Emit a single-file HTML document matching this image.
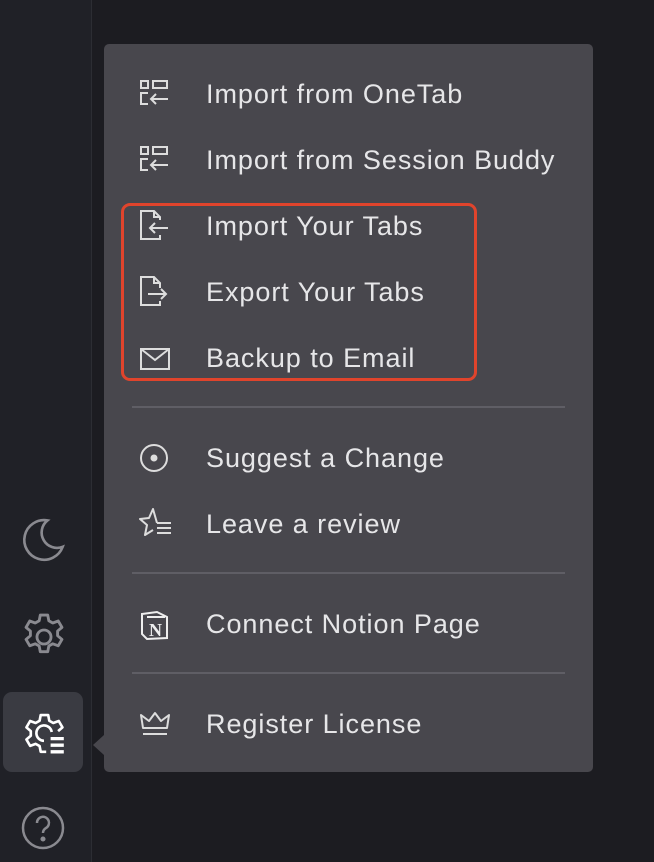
<!DOCTYPE html>
<html><head><style>
body{margin:0;width:654px;height:862px;background:#1c1c21;position:relative;overflow:hidden;font-family:"Liberation Sans",sans-serif}
.side{position:absolute;left:0;top:0;width:91px;height:862px;background:#202127;border-right:1px solid #2c2d33}
.menu{position:absolute;left:104px;top:44px;width:489px;height:728px;background:#48474d;border-radius:5px}
.item{position:absolute;left:102px;font-size:27px;color:#e6e6e8;line-height:30px;letter-spacing:0.95px}
.ic{position:absolute;left:36px}
.div{position:absolute;left:28px;width:433px;height:2px;background:#5f5e65}
svg{overflow:visible}
</style></head><body>
<div class="side">
<svg style="position:absolute;left:22px;top:518px" width="44" height="44" viewBox="2 2 20 20" fill="none" stroke="#8a8a90" stroke-width="1.2"><path d="M21 12.79A9 9 0 1 1 11.21 3 7 7 0 0 0 21 12.79z" transform="rotate(15 12 12)"/></svg>
<svg style="position:absolute;left:22px;top:614px" width="44" height="46" viewBox="2.5 1.5 19 21" fill="none" stroke="#8a8a90" stroke-width="1.3" stroke-linejoin="round"><path d="M10.3 2h3.4l.5 2.6 1.8 1 2.5-.9 1.7 2.9-2 1.7v2.1l2 1.7-1.7 2.9-2.5-.9-1.8 1-.5 2.6h-3.4l-.5-2.6-1.8-1-2.5.9-1.7-2.9 2-1.7v-2.1l-2-1.7 1.7-2.9 2.5.9 1.8-1z"/><circle cx="12" cy="12" r="3.2"/></svg>
<div style="position:absolute;left:3px;top:692px;width:80px;height:80px;background:#3a3b42;border-radius:9px"></div>
<svg style="position:absolute;left:22px;top:710px" width="44" height="44" viewBox="2 2 20 20" fill="none" stroke="#fff" stroke-width="1.2" stroke-linejoin="round"><path d="M13 21h-2.5l-.5-2.6-1.8-1-2.5.9-1.7-2.9 2-1.7v-2.1l-2-1.7 1.7-2.9 2.5.9 1.8-1 .5-2.6h3.4l.5 2.6 1.8 1 2.5-.9 1.7 2.9-2 1.7"/><path d="M12 16a3.5 3.5 0 1 1 3.5-4"/><path d="M15 15h6M15 18h6M15 21h6" stroke-width="1.5"/></svg>
<svg style="position:absolute;left:22px;top:806px" width="44" height="44" viewBox="0 0 44 44" fill="none" stroke="#8a8a90" stroke-width="2.5"><circle cx="21" cy="22" r="20"/><path d="M15 17a6 6 0 1 1 9 5c-2 1.2-3 2.5-3 5"/><circle cx="21" cy="33" r="1.3" fill="#8a8a90"/></svg>
</div>
<div style="position:absolute;left:93px;top:735px;width:0;height:0;border-top:10px solid transparent;border-bottom:10px solid transparent;border-right:11px solid #48474d"></div>
<div class="menu">
<svg class="ic" style="top:36px" width="30" height="26" viewBox="0 0 30 26" fill="none" stroke="#ddd" stroke-width="2"><rect x="1" y="1" width="7" height="7"/><rect x="13" y="1" width="14" height="7"/><path d="M8 13H1v11h7M28 19H11M16 14l-5 5 5 5"/></svg>
<div class="item" style="top:35px">Import from OneTab</div>
<svg class="ic" style="top:102px" width="30" height="26" viewBox="0 0 30 26" fill="none" stroke="#ddd" stroke-width="2"><rect x="1" y="1" width="7" height="7"/><rect x="13" y="1" width="14" height="7"/><path d="M8 13H1v11h7M28 19H11M16 14l-5 5 5 5"/></svg>
<div class="item" style="top:101px">Import from Session Buddy</div>
<svg class="ic" style="top:166px" width="30" height="30" viewBox="0 0 30 30" fill="none" stroke="#ddd" stroke-width="2"><path d="M20 10V7l-6-6H1v28h19v-4M14 1v6h6M28 18H10M15 13l-5 5 5 5"/></svg>
<div class="item" style="top:167px">Import Your Tabs</div>
<svg class="ic" style="top:232px" width="30" height="30" viewBox="0 0 30 30" fill="none" stroke="#ddd" stroke-width="2"><path d="M20 12V7l-6-6H1v28h19v-4M14 1v6h6M8 18h18M21 13l5 5-5 5"/></svg>
<div class="item" style="top:233px">Export Your Tabs</div>
<svg class="ic" style="top:304px" width="30" height="22" viewBox="0 0 30 22" fill="none" stroke="#ddd" stroke-width="2"><rect x="1" y="1" width="28" height="20"/><path d="M1 1l14 11 14-11"/></svg>
<div class="item" style="top:299px">Backup to Email</div>
<div style="position:absolute;left:17px;top:159px;width:350px;height:172px;border:3px solid #e0442c;border-radius:9px"></div>
<div class="div" style="top:362px"></div>
<svg class="ic" style="top:400px" width="30" height="30" viewBox="0 0 30 30" fill="none" stroke="#ddd" stroke-width="2"><circle cx="14" cy="14" r="13"/><circle cx="14" cy="14" r="2.5" fill="#ddd"/></svg>
<div class="item" style="top:399px">Suggest a Change</div>
<svg class="ic" style="top:464px" width="32" height="30" viewBox="0 0 32 30" fill="none" stroke="#ddd" stroke-width="2" stroke-linejoin="round"><path d="M17 15L13 1 9 10 0 11 7 17 5 27 13 22"/><path d="M17 15h14M17 20h14M17 25h14"/></svg>
<div class="item" style="top:465px">Leave a review</div>
<div class="div" style="top:528px"></div>
<svg class="ic" style="top:566px" width="30" height="30" viewBox="0 0 30 30" fill="none" stroke="#eee" stroke-width="2"><path d="M2 4l15-2 10 5v21l-20 1-5-5z"/><path d="M7 7h18"/><text x="9" y="26" font-family="Liberation Serif" font-weight="bold" font-size="18" fill="#eee" stroke="none">N</text></svg>
<div class="item" style="top:565px">Connect Notion Page</div>
<div class="div" style="top:628px"></div>
<svg class="ic" style="top:668px" width="30" height="24" viewBox="0 0 30 24" fill="none" stroke="#ddd" stroke-width="2" stroke-linejoin="round"><path d="M3 16L1 3l8 6 6-8 6 8 8-6-2 13z"/><path d="M3 22h24"/></svg>
<div class="item" style="top:665px">Register License</div>
</div>
</body></html>
